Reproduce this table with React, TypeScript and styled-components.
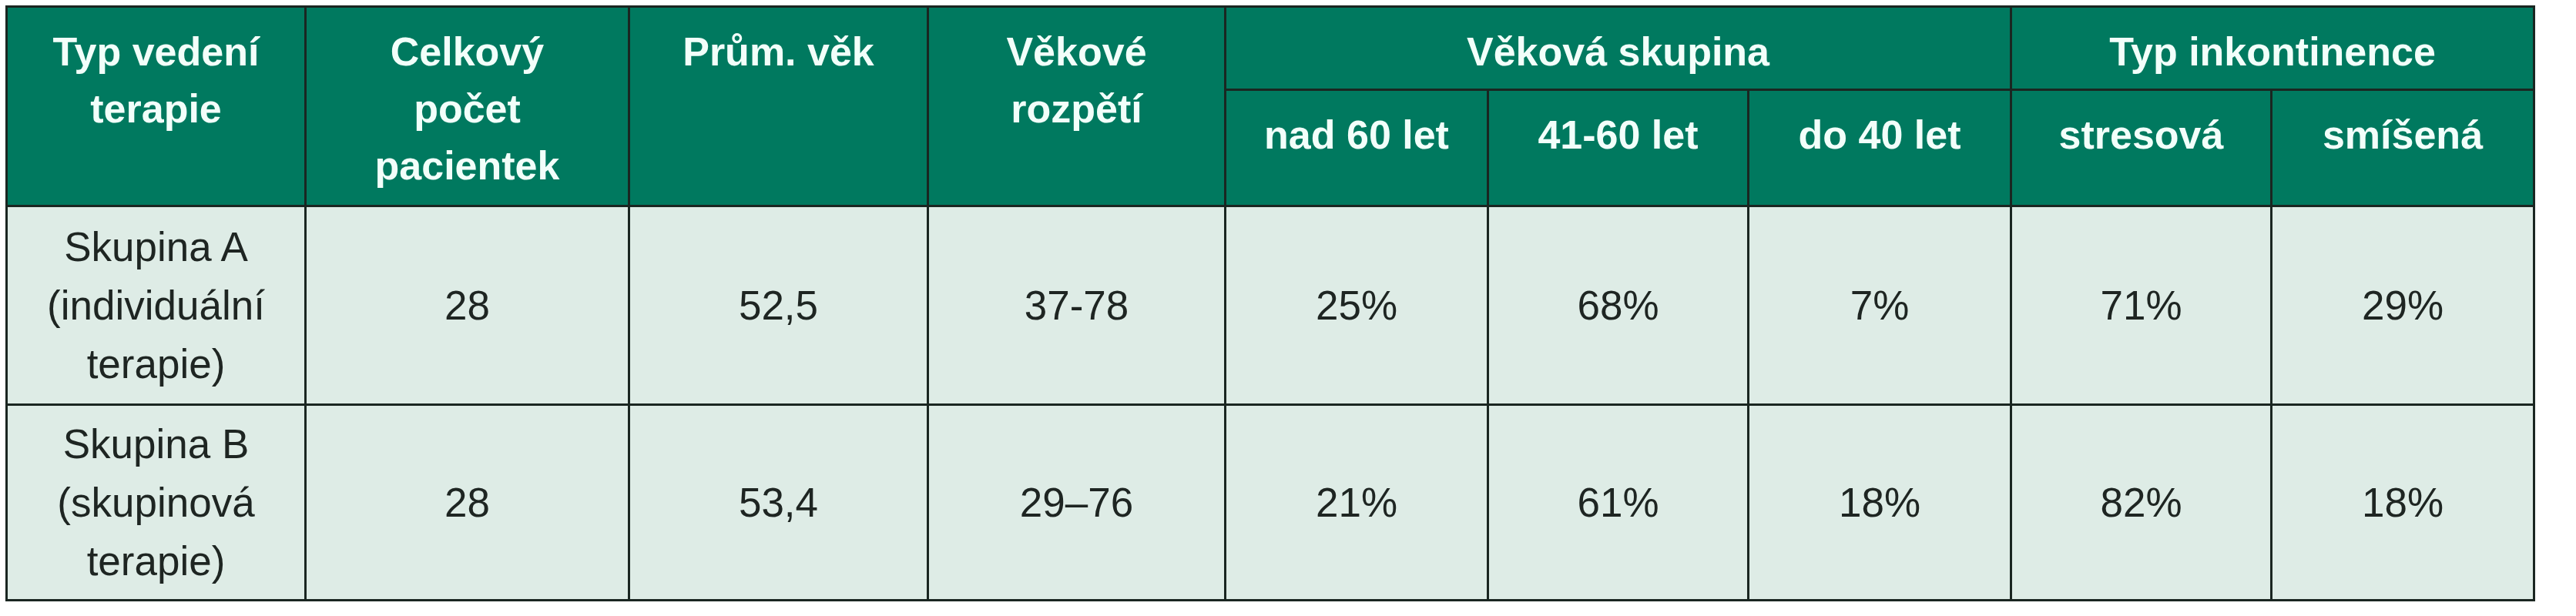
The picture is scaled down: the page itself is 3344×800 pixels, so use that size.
import React from "react";
import styled, { createGlobalStyle } from "styled-components";

const Global = createGlobalStyle`
  html, body { margin: 0; padding: 0; background: #ffffff; }
  body { font-family: "Liberation Sans", Arial, sans-serif; }
`;

const Page = styled.div`
  padding: 7px;
`;

const Table = styled.div`
  display: grid;
  grid-template-columns: 385px 417px 385px 383px 338px 335px 338px 335px 338px;
  grid-template-rows: 105px 148px 255px 251px;
  gap: 3px;
  padding: 3px;
  background: #1a2621;
  width: max-content;
`;

const HeadCell = styled.div<{ $colSpan?: number; $rowSpan?: number }>`
  grid-column: span ${(p) => p.$colSpan ?? 1};
  grid-row: span ${(p) => p.$rowSpan ?? 1};
  background: #00795f;
  color: #f2fffa;
  font-family: "Liberation Sans", Arial, sans-serif;
  font-weight: 700;
  font-size: 52px;
  line-height: 74px;
  text-align: center;
  padding: 20px 10px 0;
`;

const BodyCell = styled.div`
  background: #deece6;
  color: #1e2522;
  font-family: "Liberation Sans", Arial, sans-serif;
  font-weight: 400;
  font-size: 53px;
  line-height: 76px;
  display: flex;
  align-items: center;
  justify-content: center;
  text-align: center;
  padding: 0 10px;
`;

type Row = { group: React.ReactNode; values: string[] };

const rows: Row[] = [
  {
    group: (
      <>
        Skupina A<br />
        (individuální
        <br />
        terapie)
      </>
    ),
    values: ["28", "52,5", "37-78", "25%", "68%", "7%", "71%", "29%"],
  },
  {
    group: (
      <>
        Skupina B<br />
        (skupinová
        <br />
        terapie)
      </>
    ),
    values: ["28", "53,4", "29–76", "21%", "61%", "18%", "82%", "18%"],
  },
];

const subHeads = ["nad 60 let", "41-60 let", "do 40 let", "stresová", "smíšená"];

export default function App() {
  return (
    <Page>
      <Global />
      <Table>
        <HeadCell $rowSpan={2}>
          Typ vedení
          <br />
          terapie
        </HeadCell>
        <HeadCell $rowSpan={2}>
          Celkový
          <br />
          počet
          <br />
          pacientek
        </HeadCell>
        <HeadCell $rowSpan={2}>Prům. věk</HeadCell>
        <HeadCell $rowSpan={2}>
          Věkové
          <br />
          rozpětí
        </HeadCell>
        <HeadCell $colSpan={3}>Věková skupina</HeadCell>
        <HeadCell $colSpan={2}>Typ inkontinence</HeadCell>
        {subHeads.map((s) => (
          <HeadCell key={s}>{s}</HeadCell>
        ))}
        {rows.map((r, i) => (
          <React.Fragment key={i}>
            <BodyCell>
              <div>{r.group}</div>
            </BodyCell>
            {r.values.map((v, j) => (
              <BodyCell key={j}>{v}</BodyCell>
            ))}
          </React.Fragment>
        ))}
      </Table>
    </Page>
  );
}
